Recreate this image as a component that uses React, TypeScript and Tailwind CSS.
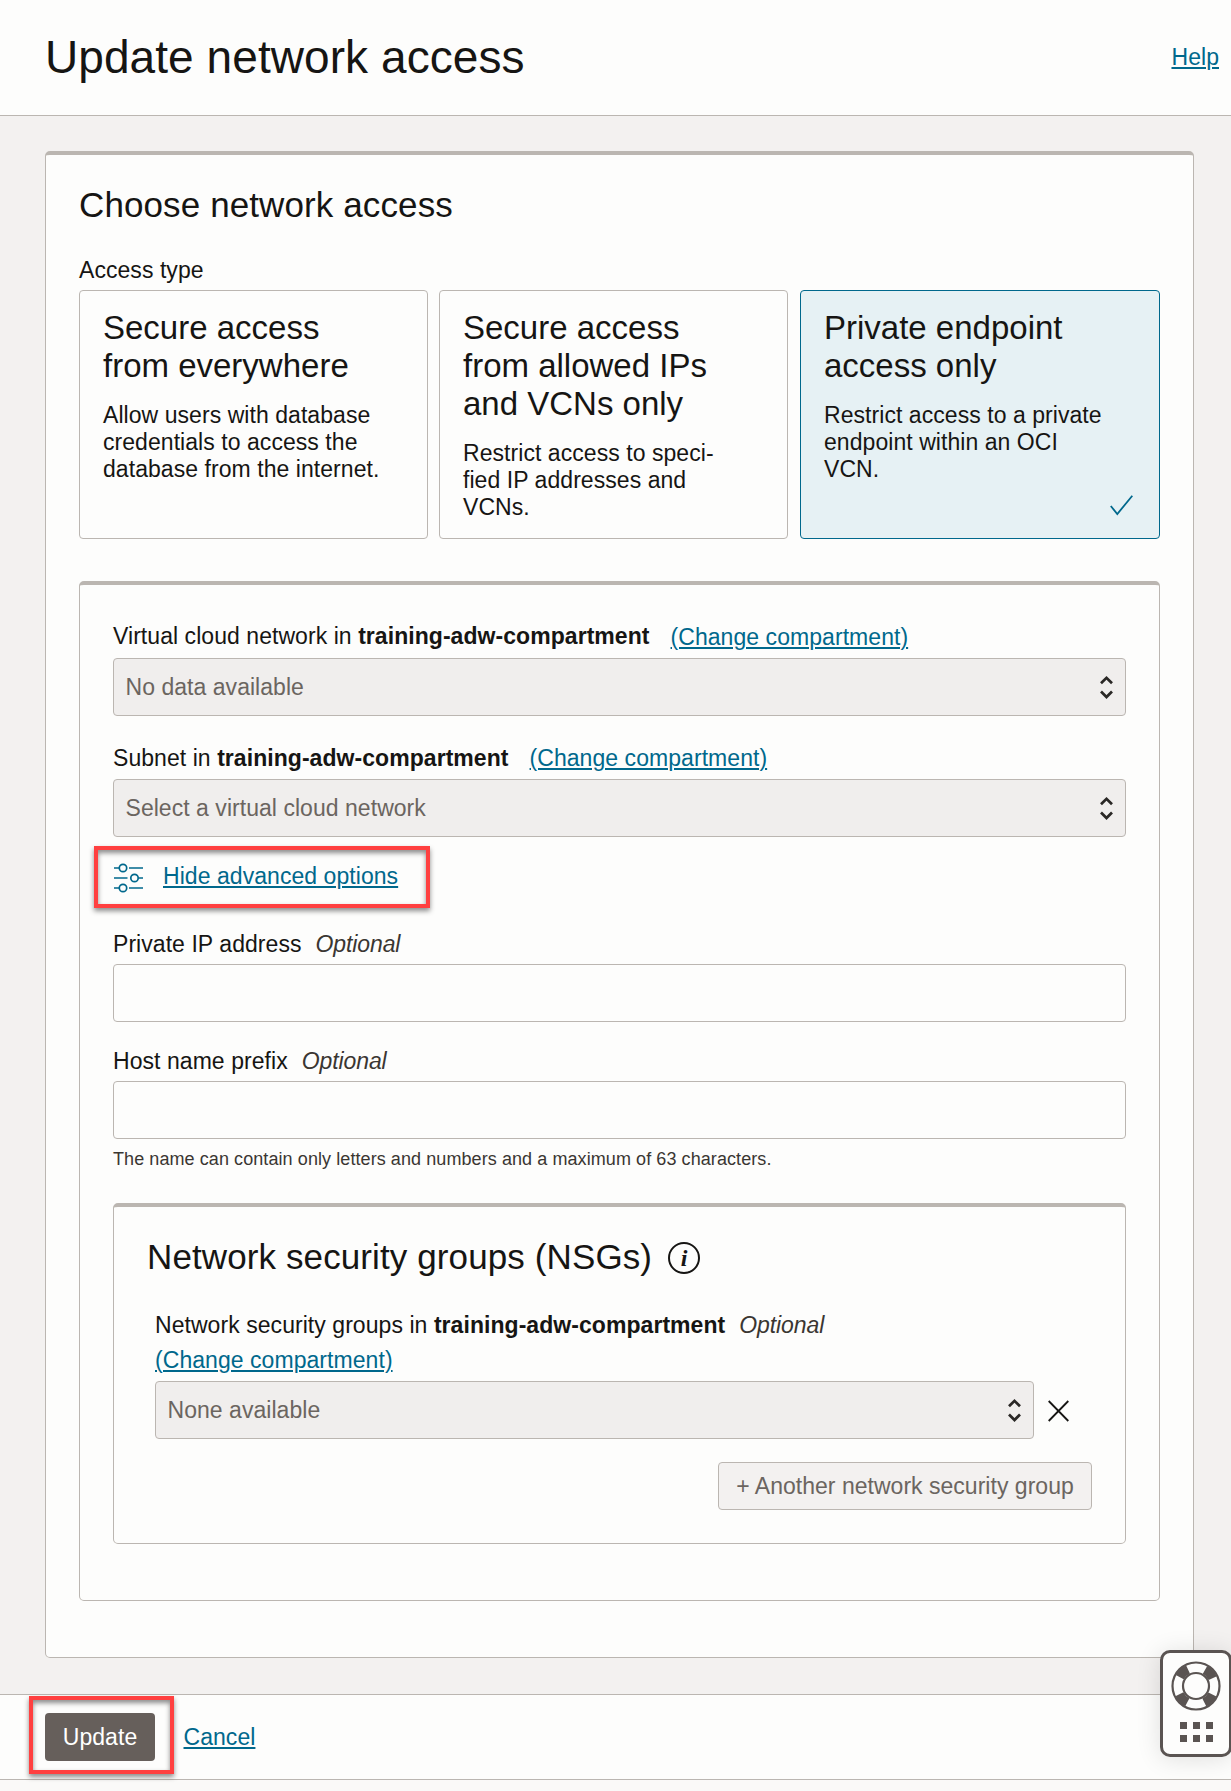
import type { ReactNode } from "react";

const cards = [
  {
    title: ["Secure access", "from everywhere"],
    text: ["Allow users with database", "credentials to access the", "database from the internet."],
    selected: false,
  },
  {
    title: ["Secure access", "from allowed IPs", "and VCNs only"],
    text: ["Restrict access to speci-", "fied IP addresses and", "VCNs."],
    selected: false,
  },
  {
    title: ["Private endpoint", "access only"],
    text: ["Restrict access to a private", "endpoint within an OCI", "VCN."],
    selected: true,
  },
];

function Link({ children, className = "" }: { children: ReactNode; className?: string }) {
  return (
    <a
      href="#"
      className={`whitespace-nowrap text-[#00688c] underline decoration-2 underline-offset-2 ${className}`}
    >
      {children}
    </a>
  );
}

function Chevrons() {
  return (
    <svg width="15" height="26" viewBox="0 0 15 26" fill="none" stroke="#2a2826" strokeWidth="2.7">
      <path d="M2 9.300 7.500 3.800l5.500 5.500M2 17.500l5.500 5.500 5.500-5.500" />
    </svg>
  );
}

function Select({ children, className = "" }: { children: ReactNode; className?: string }) {
  return (
    <div
      className={`flex h-[58px] items-center justify-between rounded-[4px] border border-[#bbb6b1] bg-[#f0eeed] pr-[11px] pl-[11.5px] tracking-[0.04px] text-[#6b6560] ${className}`}
    >
      <span className="pb-px">{children}</span>
      <Chevrons />
    </div>
  );
}

function Optional() {
  return <span className="ml-[14px] tracking-[-0.1px] text-[#3a3632] italic">Optional</span>;
}

function TextInput() {
  return (
    <input
      type="text"
      className="mt-[7px] block h-[58px] w-full rounded-[4px] border border-[#bbb6b1] bg-[#fdfdfc]"
    />
  );
}

function SlidersIcon() {
  return (
    <svg
      className="mt-px"
      width="29"
      height="30"
      viewBox="0 0 29 30"
      fill="none"
      stroke="#00688c"
      strokeWidth="1.7"
    >
      <path d="M0 5h5M15 5h14M0 15h13.500M25 15h4M0 25h5M15 25h14" />
      <circle cx="9" cy="5" r="3.700" />
      <circle cx="20.500" cy="15" r="3.700" />
      <circle cx="9" cy="25" r="3.700" />
    </svg>
  );
}

function SupportWidget() {
  return (
    <div className="absolute top-[1650px] left-[1160px] flex h-[107px] w-[72px] flex-col items-center rounded-[10px] border-[3px] border-[#5a5452] bg-[#fdfdfc] pt-[8px] shadow-[0_2px_24px_rgba(0,0,0,0.12)]">
      <svg width="50" height="50" viewBox="0 0 50 50" fill="none" stroke="#5a5452">
        <circle cx="25" cy="25" r="18.500" strokeWidth="9" strokeDasharray="11.400 17.660" strokeDashoffset="-8.830" />
        <circle cx="25" cy="25" r="23.500" strokeWidth="2.200" />
        <circle cx="25" cy="25" r="13" strokeWidth="2.200" />
      </svg>
      <div className="mt-[11px] grid grid-cols-3 gap-x-[6px] gap-y-[6px]">
        {[0, 1, 2, 3, 4, 5].map((i) => (
          <span key={i} className="size-[7px] bg-[#5a5452]" />
        ))}
      </div>
    </div>
  );
}

export default function App() {
  return (
    <div className="relative h-[1791px] w-[1231px] overflow-hidden bg-[#faf9f8] font-['Liberation_Sans',Arial,sans-serif] text-[23px] leading-[26px] tracking-[0.055px] text-[#161513]">
      <header className="flex h-[116px] items-start justify-between border-b border-[#bbb6b1] bg-[#fdfdfc] pt-[31px] pr-[12px] pl-[45px]">
        <h1 className="text-[46px] leading-[52px] tracking-[0.07px]">Update network access</h1>
        <Link className="mt-[13px]">Help</Link>
      </header>

      <main className="h-[1578px] bg-[#f3f1f0] pt-[35px] pl-[45px]">
        <section className="h-[1507px] w-[1149px] rounded-[5px] border border-t-4 border-[#bbb6b1] bg-[#fdfdfc] px-[33px] pt-[30px]">
          <h2 className="text-[35px] leading-[39px] tracking-[0.11px]">Choose network access</h2>
          <div className="mt-[33px]">Access type</div>
          <div className="mt-[7px] flex gap-[11px]">
            {cards.map((card) => (
              <div
                key={card.text[0]}
                className={`relative h-[249px] rounded-[4px] border pt-[18px] pl-[23px] whitespace-nowrap ${
                  card.selected
                    ? "ml-px w-[360px] border-[#00688c] bg-[#e6f1f4]"
                    : "w-[349px] border-[#bbb6b1] bg-[#fdfdfc]"
                }`}
              >
                <h3 className="text-[33px] leading-[38px] tracking-normal">
                  {card.title.map((line) => (
                    <div key={line}>{line}</div>
                  ))}
                </h3>
                <div className="mt-[17px] leading-[27px]">
                  {card.text.map((line) => (
                    <div key={line}>{line}</div>
                  ))}
                </div>
                {card.selected && (
                  <svg
                    className="absolute right-[26px] bottom-[22px]"
                    width="23"
                    height="21"
                    viewBox="0 0 23 21"
                    fill="none"
                    stroke="#00688c"
                    strokeWidth="1.800"
                  >
                    <path d="M.8 11 7.300 19 22.300.7" />
                  </svg>
                )}
              </div>
            ))}
          </div>

          <section className="mt-[42px] h-[1020px] rounded-[5px] border border-t-4 border-[#bbb6b1] px-[33px] pt-[38px]">
            <div className="flex">
              <span>
                Virtual cloud network in <b>training-adw-compartment</b>
              </span>
              <Link className="relative top-px ml-[21px]">(Change compartment)</Link>
            </div>
            <Select className="mt-[9px]">No data available</Select>

            <div className="mt-[29px] flex">
              <span>
                Subnet in <b>training-adw-compartment</b>
              </span>
              <Link className="ml-[21px]">(Change compartment)</Link>
            </div>
            <Select className="mt-[8px]">Select a virtual cloud network</Select>

            <div className="mt-[9px] -ml-[19px] flex h-[62px] w-[336px] items-start border-4 border-[#ff4040] pt-[12px] pl-[16px] shadow-[0_3px_5px_rgba(0,0,0,0.45),inset_0_3px_5px_rgba(0,0,0,0.45)]">
              <SlidersIcon />
              <Link className="mt-px ml-[20px]">Hide advanced options</Link>
            </div>

            <div className="mt-[23px]">
              Private IP address
              <Optional />
            </div>
            <TextInput />

            <div className="mt-[26px]">
              Host name prefix
              <Optional />
            </div>
            <TextInput />
            <p className="mt-[10px] text-[18px] leading-[20px] tracking-[0.08px] text-[#3a3632]">
              The name can contain only letters and numbers and a maximum of 63 characters.
            </p>

            <section className="mt-[34px] h-[341px] rounded-[5px] border border-t-4 border-[#bbb6b1] pt-[30px] pr-[33px] pl-[41px]">
              <div className="-ml-[8px] flex items-center">
                <h2 className="text-[35px] leading-[39px] tracking-[0.11px]">Network security groups (NSGs)</h2>
                <span className="relative top-px ml-[16px] flex size-[32px] items-center justify-center rounded-full border-2 border-[#161513] font-['Liberation_Serif',serif] text-[24px] font-bold italic">
                  i
                </span>
              </div>
              <div className="mt-[36px]">
                Network security groups in <b>training-adw-compartment</b>
                <Optional />
              </div>
              <div className="mt-[9px] flex">
                <Link>(Change compartment)</Link>
              </div>
              <div className="mt-[8px] flex items-center">
                <Select className="w-[879px]">None available</Select>
                <svg
                  className="mt-px ml-[14px]"
                  width="21"
                  height="22"
                  viewBox="0 0 21 22"
                  stroke="#161513"
                  strokeWidth="1.800"
                >
                  <path d="M.7 1 20.300 21M20.300 1 .7 21" />
                </svg>
              </div>
              <div className="mt-[23px] flex justify-end">
                <button className="h-[48px] w-[374px] rounded-[4px] border border-[#bbb6b1] bg-[#f3f1f0] tracking-[0.02px] whitespace-nowrap text-[#6b6560]">
                  + Another network security group
                </button>
              </div>
            </section>
          </section>
        </section>
      </main>

      <footer className="flex h-[86px] items-start border-y border-[#bbb6b1] bg-[#fdfdfc] pt-px pl-[29px]">
        <div className="h-[78px] w-[145px] border-4 border-[#ff4040] pt-[13px] pl-[12px] shadow-[0_3px_5px_rgba(0,0,0,0.45),inset_0_3px_5px_rgba(0,0,0,0.45)]">
          <button className="h-[48px] w-[110px] rounded-[4px] bg-[#665f5b] text-white">Update</button>
        </div>
        <Link className="mt-[28px] ml-[9.5px]">Cancel</Link>
      </footer>

      <SupportWidget />
    </div>
  );
}
